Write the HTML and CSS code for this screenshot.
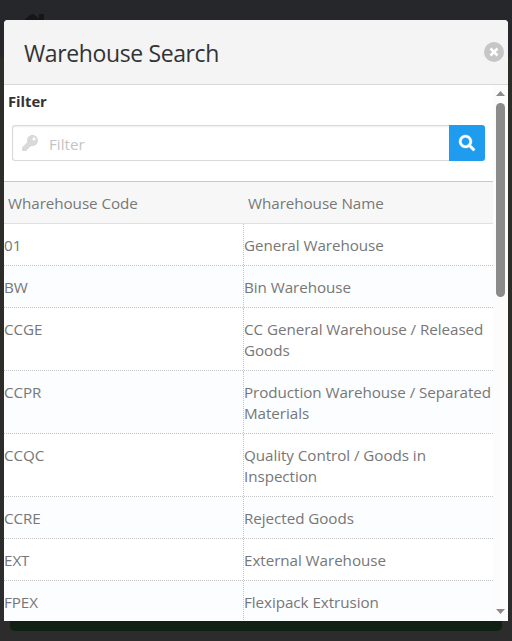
FILE: index.html
```
<!DOCTYPE html>
<html lang="en">
<head>
<meta charset="utf-8">
<title>Warehouse Search</title>
<link rel="stylesheet" href="styles.css">
</head>
<body>
<svg class="home-icon" viewBox="0 0 24 20"><path d="M0 7 8 .6Q9.500-.5 11 .6L16 4.500V0h5v8l3 3v9H2V8z"/></svg>
<div class="page-panel"></div>
<main class="dialog">
  <header class="dialog-header">
    <h1>Warehouse Search</h1>
    <button class="close" aria-label="Close"><svg viewBox="0 0 20 20"><circle cx="10" cy="10" r="10" fill="#c6c6c6"/><path d="M6.500 6.500l7 7M13.500 6.500l-7 7" stroke="#fff" stroke-width="2.500"/></svg></button>
  </header>
  <div class="dialog-body">
    <div class="content">
      <h2>Filter</h2>
      <div class="search">
        <div class="field">
          <svg viewBox="0 0 512 512"><path d="M512 176.001C512 273.203 433.202 352 336 352c-11.22 0-22.19-1.062-32.827-3.069l-24.012 27.014A23.999 23.999 0 0 1 261.223 384H224v40c0 13.255-10.745 24-24 24h-40v40c0 13.255-10.745 24-24 24H24c-13.255 0-24-10.745-24-24v-78.059c0-6.365 2.529-12.47 7.029-16.971l161.802-161.802C163.108 213.814 160 195.271 160 176 160 78.798 238.797.001 335.999 0 433.488-.001 512 78.511 512 176.001zM336 128c0 26.51 21.49 48 48 48s48-21.49 48-48-21.49-48-48-48-48 21.490-48 48z"/></svg>
          <input type="text" placeholder="Filter">
        </div>
        <button class="search-button" aria-label="Search"><svg viewBox="0 0 512 512"><path d="M505 442.700L405.300 343c-4.500-4.500-10.600-7-17-7H372c27.600-35.300 44-79.700 44-128C416 93.100 322.900 0 208 0S0 93.100 0 208s93.100 208 208 208c48.300 0 92.700-16.400 128-44v16.300c0 6.400 2.500 12.500 7 17l99.700 99.700c9.400 9.400 24.600 9.400 33.900 0l28.300-28.300c9.400-9.400 9.400-24.600.1-34zM208 336c-70.700 0-128-57.200-128-128 0-70.700 57.200-128 128-128 70.700 0 128 57.200 128 128 0 70.700-57.200 128-128 128z"/></svg></button>
      </div>
      <div class="table">
        <div class="row head"><div>Wharehouse Code</div><div>Wharehouse Name</div></div>
        <div class="row"><div>01</div><div>General Warehouse</div></div>
        <div class="row alt"><div>BW</div><div>Bin Warehouse</div></div>
        <div class="row"><div>CCGE</div><div>CC General Warehouse / Released<br>Goods</div></div>
        <div class="row alt"><div>CCPR</div><div>Production Warehouse / Separated<br>Materials</div></div>
        <div class="row"><div>CCQC</div><div>Quality Control / Goods in<br>Inspection</div></div>
        <div class="row alt"><div>CCRE</div><div>Rejected Goods</div></div>
        <div class="row"><div>EXT</div><div>External Warehouse</div></div>
        <div class="row alt"><div>FPEX</div><div>Flexipack Extrusion</div></div>
      </div>
    </div>
    <div class="scrollbar">
      <svg class="arrow" viewBox="0 0 9 5"><path d="M0 5 4.500 0 9 5z"/></svg>
      <div class="thumb"></div>
      <svg class="arrow down" viewBox="0 0 9 5"><path d="M0 0h9L4.500 5z"/></svg>
    </div>
  </div>
</main>
</body>
</html>
```
FILE: styles.css
```
* { box-sizing: border-box; }
body {
  margin: 0;
  height: 641px;
  padding: 20px 4px;
  overflow: hidden;
  background: linear-gradient(#26272b 0, #26272b 56px, #2e2c28 58px, #2d2c2a 400px, #2c2c2c 560px);
  font: 15.2px/21px "Open Sans", "Noto Sans", sans-serif;
  letter-spacing: -.05px;
  color: #777;
}
h1, h2 { margin: 0; color: #333; }
button { border: 0; padding: 0; }
svg { display: block; }
.home-icon { position: absolute; left: 23px; top: 14px; width: 24px; height: 20px; fill: #151618; }
.page-panel { position: absolute; left: 10px; right: 10px; top: 600px; height: 31px; border-radius: 0 0 5px 5px; background: #102015; }
.dialog {
  position: relative;
  display: flex;
  flex-direction: column;
  height: 601px;
  overflow: hidden;
  border-radius: 4px 4px 0 0;
  background: #fff;
}
.dialog-header {
  flex: none;
  display: flex;
  align-items: center;
  justify-content: space-between;
  height: 65px;
  padding: 0 4px 0 20px;
  border-bottom: 1px solid #d8d8d8;
  background: #f4f4f4;
}
h1 { font-size: 23px; line-height: 32px; font-weight: 400; padding-top: 2px; letter-spacing: -.38px; white-space: nowrap; }
.close { width: 20px; height: 20px; background: none; }
.dialog-body { flex: 1; min-height: 0; display: flex; }
.content { width: 489px; overflow: hidden; }
h2 { font-size: 14.8px; line-height: 21px; font-weight: 700; padding: 6px 4px 0; height: 40px; }
.search { display: flex; height: 36px; margin: 0 8px 20px; }
.field {
  flex: 1;
  display: flex;
  align-items: center;
  gap: 11px;
  padding-left: 9px;
  border: 1px solid #d9d9d9;
  border-right: 0;
  border-radius: 3px 0 0 3px;
  box-shadow: inset 0 1px 2px rgba(0, 0, 0, .07);
}
.field svg { width: 16px; height: 16px; fill: #d9d9d9; }
input { flex: 1; min-width: 0; border: 0; padding: 2px 0 0; outline: 0; background: none; font: inherit; }
input::placeholder { color: #c4c4c4; opacity: 1; }
.search-button { display: grid; place-items: center; width: 36px; border-radius: 0 3px 3px 0; background: #209cee; }
.search-button svg { width: 16px; height: 16px; fill: #fff; stroke: #fff; stroke-width: 10; overflow: visible; }
.row { display: grid; grid-template-columns: 239px 250px; border-bottom: 1px dotted #c4c4c4; white-space: nowrap; }
.row > div { padding: 11px 0 9px; }
.row > div + div { border-left: 1px dotted #c4c4c4; }
.alt { background: #fbfdff; }
.row.head { height: 43px; border-top: 1px solid #c8c8c8; border-bottom: 1px solid #e0e0e0; background: #f7f7f7; }
.row.head > div { padding-left: 4px; border-left-color: transparent; }
.scrollbar { width: 15px; display: flex; flex-direction: column; align-items: center; padding: 6px 0 7px; background: #fcfcfc; }
.arrow { width: 9px; height: 5px; fill: #8b8b8b; }
.thumb { width: 9px; height: 194px; margin-top: 7px; border-radius: 5px; background: #8b8b8b; }
.down { margin-top: auto; }
```
